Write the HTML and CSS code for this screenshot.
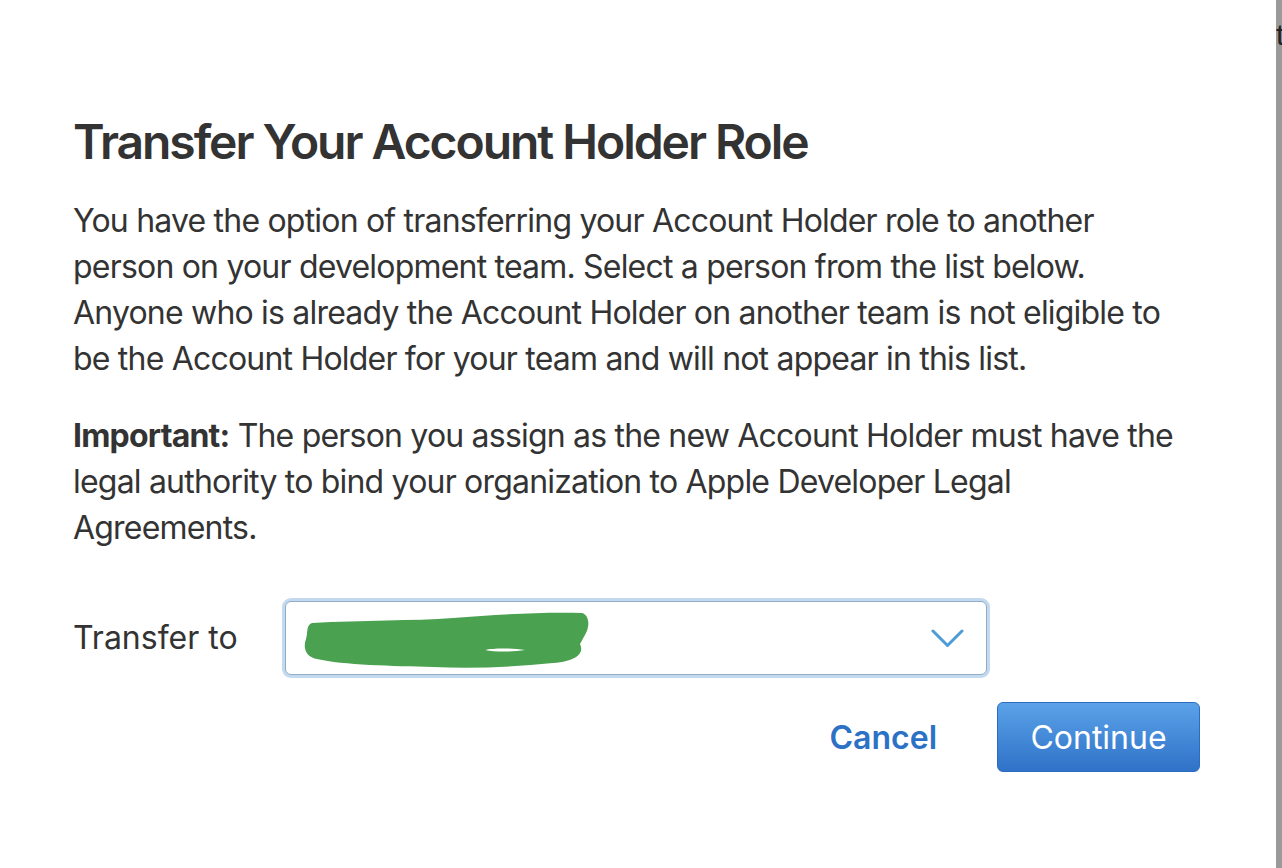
FILE: index.html
```html
<!DOCTYPE html>
<html lang="en">
<head>
<meta charset="utf-8">
<title>Transfer Your Account Holder Role</title>
<link rel="stylesheet" href="styles.css">
</head>
<body>
<div class="page">
  <main class="dialog">
    <h1 class="title">Transfer Your Account Holder Role</h1>
    <p class="para">You have the option of transferring your Account Holder role to another<br>person on your development team. Select a person from the list below.<br>Anyone who is already the Account Holder on another team is not eligible to<br>be the Account Holder for your team and will not appear in this list.</p>
    <p class="para para-important"><strong>Important:</strong> The person you assign as the new Account Holder must have the<br>legal authority to bind your organization to Apple Developer Legal<br>Agreements.</p>
    <div class="form-row">
      <label class="form-label">Transfer to</label>
      <div class="select">
        <svg class="redaction" width="286" height="58" viewBox="0 0 286 58" aria-hidden="true">
          <path d="M9 12 C 60 9, 110 10, 150 7 C 190 4, 232 1, 279 2 C 286 4, 287 14, 283 22 L 277 33 C 281 41, 276 50, 250 52 C 210 56, 170 58, 130 56 C 90 55, 40 54, 14 48 C 2 46, 0 36, 3 28 C 5 22, 3 14, 9 12 Z" fill="#4aa150"/>
          <path d="M182 39 C 190 37, 210 37, 222 39 C 210 41, 192 41, 182 39 Z" fill="#ffffff"/>
        </svg>
        <svg class="chevron" width="33" height="19" viewBox="0 0 33 19" aria-hidden="true">
          <path d="M2 2 L16.5 16.5 L31 2" fill="none" stroke="#4b9cd7" stroke-width="3" stroke-linecap="round" stroke-linejoin="round"/>
        </svg>
      </div>
    </div>
    <div class="actions">
      <button class="btn-link">Cancel</button>
      <button class="btn-primary">Continue</button>
    </div>
  </main>
  <aside class="edge"><span class="edge-text">t</span></aside>
</div>
</body>
</html>
```

FILE: styles.css
```css
html, body {
  margin: 0;
  padding: 0;
  background: #ffffff;
}

body {
  font-family: Inter, "Liberation Sans", Arial, sans-serif;
  color: #333333;
}

.page {
  display: flex;
  height: 868px;
  overflow: hidden;
}

.dialog {
  flex: 1;
  padding: 113px 0 0 73px;
}

.dialog > * {
  width: 1127px;
}

.title {
  margin: 0 0 27px 0;
  font-size: 48px;
  line-height: 58px;
  font-weight: 600;
  letter-spacing: -2.05px;
  color: #333333;
  white-space: nowrap;
}

.para {
  margin: 0 0 31px 0;
  font-size: 32px;
  line-height: 46px;
  font-weight: 400;
  letter-spacing: -0.8px;
  white-space: nowrap;
}

.para strong {
  font-weight: 700;
}

.form-row {
  display: flex;
  align-items: center;
  margin-top: 50px;
}

.form-label {
  width: 212px;
  flex: none;
  font-size: 32px;
  line-height: 46px;
}

.select {
  width: 702px;
  height: 74px;
  box-sizing: border-box;
  border: 1px solid #92adc6;
  border-radius: 6px;
  box-shadow: 0 0 0 3px #c2d9ef;
  background: #ffffff;
  display: flex;
  align-items: center;
  justify-content: space-between;
  padding: 0 22px 0 17px;
}

.redaction {
  display: block;
  margin-top: 4px;
}

.chevron {
  display: block;
}

.actions {
  display: flex;
  justify-content: flex-end;
  align-items: center;
  margin-top: 27px;
  gap: 42px;
}

.btn-link {
  background: none;
  border: none;
  padding: 0 18px;
  font-family: inherit;
  font-size: 32px;
  font-weight: 600;
  color: #2b71c6;
  cursor: pointer;
}

.btn-primary {
  width: 203px;
  height: 70px;
  box-sizing: border-box;
  border: 1px solid #2c6dc1;
  border-radius: 6px;
  background: linear-gradient(#5aa2e8, #2f72c8);
  color: #ffffff;
  font-family: inherit;
  font-size: 32px;
  font-weight: 400;
  cursor: pointer;
}

.edge {
  width: 6px;
  flex: none;
  background: #9a9a9a;
  overflow: hidden;
}

.edge-text {
  display: block;
  margin-top: 17px;
  font-family: "Liberation Sans", Arial, sans-serif;
  font-size: 30px;
  line-height: 36px;
  color: #222222;
}
```
